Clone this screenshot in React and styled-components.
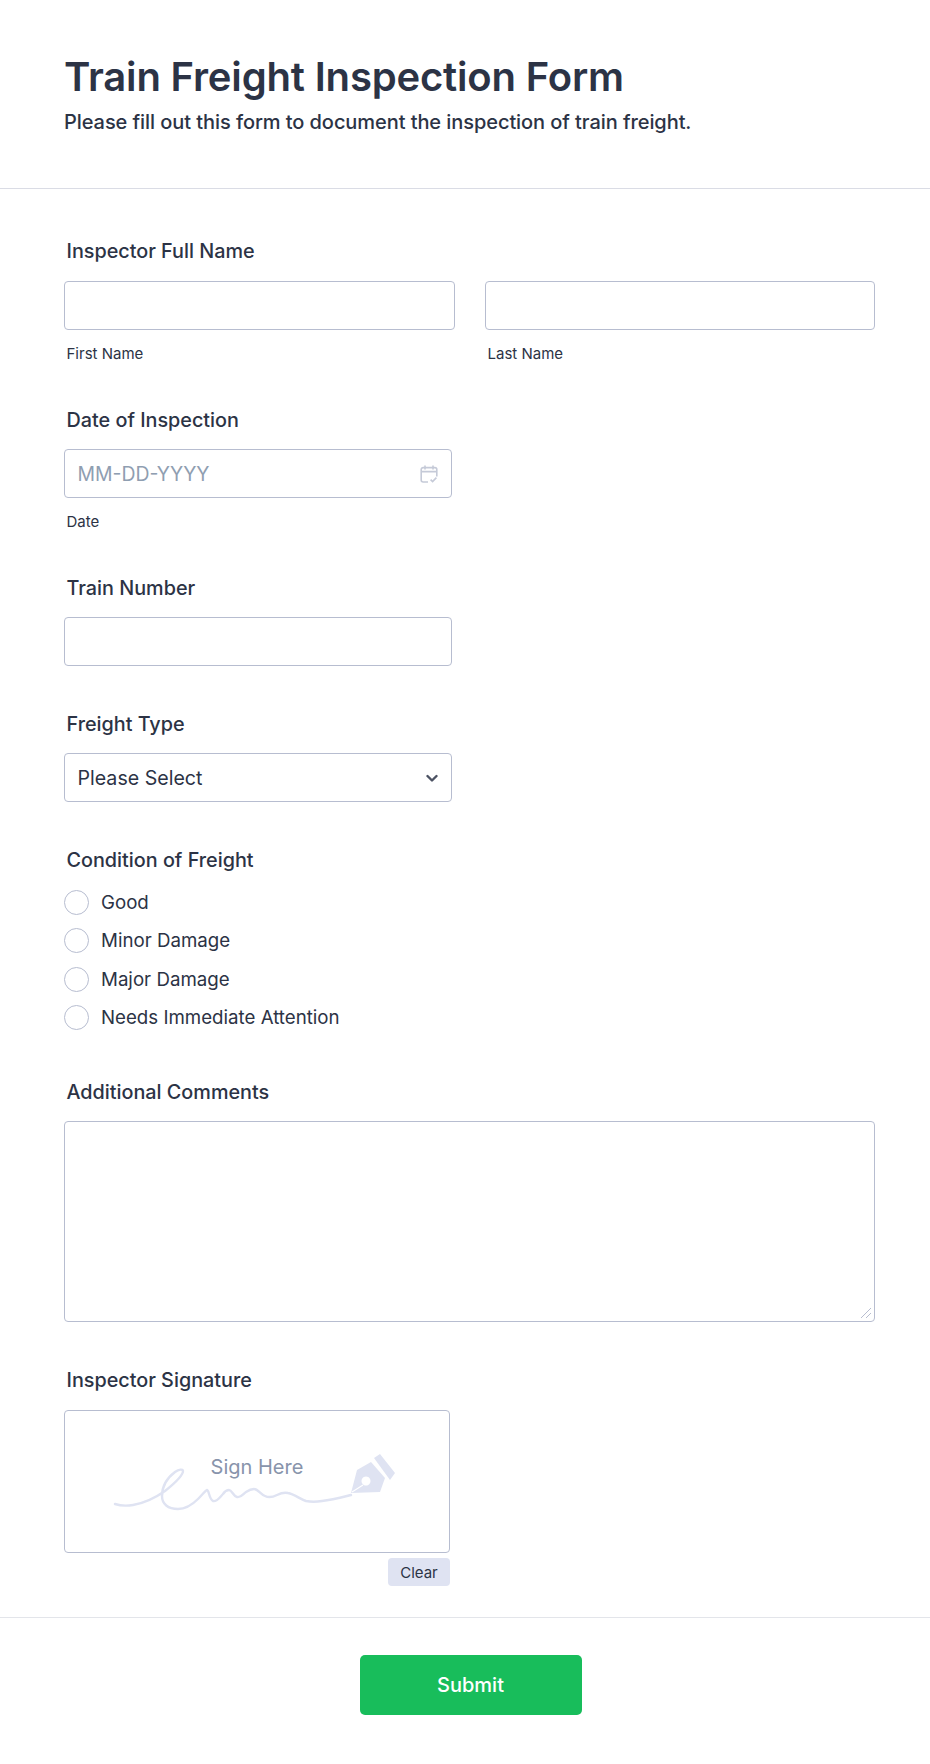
import React from "react";
import styled, { createGlobalStyle } from "styled-components";

const GlobalStyle = createGlobalStyle`
  html, body { margin: 0; padding: 0; background: #fff; }
  body { font-family: Inter, "Liberation Sans", sans-serif; color: #2c3345; }
  * { box-sizing: border-box; }
`;

const Page = styled.div`
  width: 930px;
  height: 1764px;
  background: #fff;
`;

const Header = styled.header`
  height: 189px;
  padding: 50px 64px 0;
  border-bottom: 1px solid #dadce5;
`;

const Title = styled.h1`
  margin: 0;
  font-size: 40px;
  line-height: 54px;
  font-weight: 600;
  letter-spacing: -0.17px;
  color: #2c3345;
`;

const Subtitle = styled.p`
  margin: 5px 0 0;
  font-size: 20px;
  line-height: 26px;
  font-weight: 500;
  letter-spacing: -0.07px;
`;

const Body = styled.main`
  padding: 49px 55px 0 64px;
`;

const Field = styled.section`
  margin-bottom: ${(p) => p.$gap || 0}px;
`;

const Label = styled.div`
  padding-left: 2.5px;
  height: 26px;
  margin-bottom: ${(p) => p.$gap ?? 17}px;
  font-size: 19.8px;
  line-height: 26px;
  font-weight: 500;
`;

const Row = styled.div`
  display: grid;
  grid-template-columns: 391px 391px;
  gap: 29px;

  & > div + div {
    margin-left: 1px;
    width: 390px;
  }
`;

const Box = styled.div`
  width: ${(p) => p.$width || "100%"};
  height: 49px;
  display: flex;
  align-items: center;
  justify-content: space-between;
  padding: 0 13px 0 12.5px;
  background: #fff;
  border: 1px solid #b7bdd0;
  border-radius: 4px;
  font-size: ${(p) => (p.$muted ? 19.4 : 19.6)}px;
  color: ${(p) => (p.$muted ? "#8f9eb1" : "#2c3345")};
`;

const SubLabel = styled.div`
  padding-left: 2.5px;
  margin-top: 15px;
  font-size: 15px;
  line-height: 18px;
`;

const Options = styled.div`
  display: flex;
  flex-direction: column;
  gap: 13.4px;
`;

const Option = styled.div`
  display: flex;
  align-items: center;
  gap: 12px;
  height: 25px;
  font-size: 18.7px;
`;

const Radio = styled.span`
  width: 25px;
  height: 25px;
  border: 1.5px solid #b7bdd0;
  border-radius: 50%;
`;

const TextArea = styled.div`
  position: relative;
  height: 201px;
  border: 1px solid #b7bdd0;
  border-radius: 4px;
`;

const Grip = styled.svg`
  position: absolute;
  right: 2px;
  bottom: 2px;
`;

const SignBox = styled.div`
  position: relative;
  width: 386px;
  height: 143px;
  border: 1px solid #b7bdd0;
  border-radius: 4px;
`;

const SignText = styled.span`
  position: absolute;
  top: 44px;
  left: 0;
  width: 384px;
  text-align: center;
  font-size: 20px;
  line-height: 24px;
  color: #8894ab;
`;

const ClearRow = styled.div`
  display: flex;
  justify-content: flex-end;
  width: 386px;
  margin-top: 5px;
`;

const ClearButton = styled.button`
  width: 62px;
  height: 28px;
  padding: 0;
  border: 0;
  border-radius: 4px;
  background: #dfe3f2;
  font: 400 15px Inter, sans-serif;
  color: #2c3345;
`;

const Footer = styled.footer`
  display: flex;
  justify-content: center;
  margin-top: 31px;
  padding: 37px 0 0 11px;
  border-top: 1px solid #e3e5ea;
`;

const Submit = styled.button`
  width: 222px;
  height: 60px;
  border: 0;
  border-radius: 5px;
  background: #18bd5b;
  color: #fff;
  font: 500 20px Inter, sans-serif;
`;

const CalendarIcon = () => (
  <svg width="18" height="18" viewBox="0 0 18 18" fill="none" stroke="#c5cad8" strokeWidth="1.6">
    <path d="M8 17H3.2a2 2 0 0 1-2-2V4.6a2 2 0 0 1 2-2h11.6a2 2 0 0 1 2 2v7" />
    <path d="M1.2 6.6h15.6M5 .4v4M13 .4v4" />
    <path d="M10.6 14.6l2 2 3.8-4" />
  </svg>
);

const ChevronIcon = () => (
  <svg width="12" height="12" viewBox="0 0 12 12" fill="none" stroke="#4c5263" strokeWidth="2.4" strokeLinecap="round" strokeLinejoin="round">
    <path d="M1.5 4l4.5 4.5L10.5 4" />
  </svg>
);

const SignatureArt = () => (
  <svg width="384" height="141" viewBox="0 0 384 141" fill="none">
    <path
      d="M50 93c6 2 12 2 18 1 12-2 22-7 32-14 10-8 18-16 18-20 0-2-4-2-8 1-8 6-13 15-13 24 0 8 6 13 16 13 9 0 15-5 20-10 4-4 7-8 9-9 2 0 2 9 6 11 4 1 7-4 10-7 2-3 4-4 6-4 3 0 4 6 8 7 4 1 6-3 9-5 3-2 5-3 8-3 4 0 6 5 11 7 4 2 8 1 12-1 4-2 7-3 11-2 6 1 12 6 18 8 5 1 10 1 16 0 10-1 21-4 29-6"
      stroke="#dfe3f2"
      strokeWidth="2.4"
      strokeLinecap="round"
    />
    <path
      fillRule="evenodd"
      d="M286 82l6-23 14-8 14 16-5 14zM301 65.500a4.500 4.500 0 1 0 .01 0z"
      fill="#dfe3f2"
    />
    <path d="M287 81l11-7" stroke="#fff" strokeWidth="1.2" />
    <path d="M309 47l6-4 15 19-5 7z" fill="#dfe3f2" />
  </svg>
);

const Grips = () => (
  <Grip width="12" height="12" viewBox="0 0 12 12" stroke="#b7bdd0" strokeWidth="1">
    <path d="M1 11L11 1M6 11l5-5" />
  </Grip>
);

export default function App() {
  const conditions = ["Good", "Minor Damage", "Major Damage", "Needs Immediate Attention"];
  return (
    <Page>
      <GlobalStyle />
      <Header>
        <Title>Train Freight Inspection Form</Title>
        <Subtitle>Please fill out this form to document the inspection of train freight.</Subtitle>
      </Header>
      <Body>
        <Field $gap={44}>
          <Label>Inspector Full Name</Label>
          <Row>
            <div>
              <Box />
              <SubLabel>First Name</SubLabel>
            </div>
            <div>
              <Box />
              <SubLabel>Last Name</SubLabel>
            </div>
          </Row>
        </Field>
        <Field $gap={44}>
          <Label $gap={16}>Date of Inspection</Label>
          <Box $width="388px" $muted>
            MM-DD-YYYY
            <CalendarIcon />
          </Box>
          <SubLabel>Date</SubLabel>
        </Field>
        <Field $gap={45}>
          <Label $gap={16}>Train Number</Label>
          <Box $width="388px" />
        </Field>
        <Field $gap={45}>
          <Label $gap={16}>Freight Type</Label>
          <Box $width="388px">
            Please Select
            <ChevronIcon />
          </Box>
        </Field>
        <Field $gap={49}>
          <Label $gap={17}>Condition of Freight</Label>
          <Options>
            {conditions.map((c) => (
              <Option key={c}>
                <Radio />
                {c}
              </Option>
            ))}
          </Options>
        </Field>
        <Field $gap={45}>
          <Label $gap={16}>Additional Comments</Label>
          <TextArea>
            <Grips />
          </TextArea>
        </Field>
        <Field>
          <Label $gap={17}>Inspector Signature</Label>
          <SignBox>
            <SignatureArt />
            <SignText>Sign Here</SignText>
          </SignBox>
          <ClearRow>
            <ClearButton>Clear</ClearButton>
          </ClearRow>
        </Field>
      </Body>
      <Footer>
        <Submit>Submit</Submit>
      </Footer>
    </Page>
  );
}
